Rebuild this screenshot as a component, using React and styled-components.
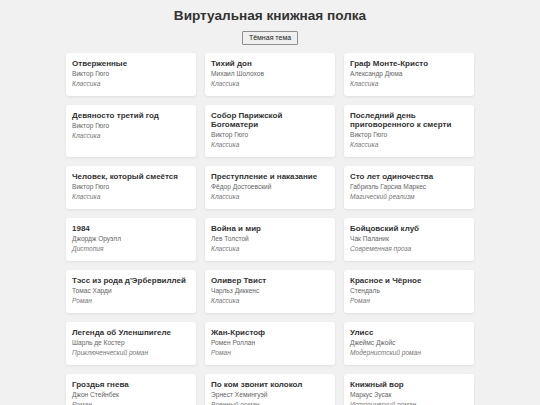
import React from "react";
import styled, { createGlobalStyle } from "styled-components";

const GlobalStyle = createGlobalStyle`
  body {
    margin: 0;
    background-color: #f1f1f1;
    font-family: "Liberation Sans", Arial, sans-serif;
  }
`;

const Page = styled.div`
  display: flex;
  flex-direction: column;
  align-items: center;
  padding: 8px 0 20px;
`;

const Title = styled.h1`
  margin: 0;
  font-size: 13.6px;
  line-height: 16px;
  font-weight: bold;
  color: #333333;
`;

const ThemeButton = styled.button`
  margin-top: 7px;
  padding: 2px 6px;
  height: 14px;
  font-family: "Liberation Sans", Arial, sans-serif;
  font-size: 7px;
  line-height: 8px;
  color: #222222;
  background-color: #efefef;
  border: 1px solid #8f8f8f;
  border-radius: 1px;
`;

const Shelf = styled.div`
  display: grid;
  grid-template-columns: repeat(3, 130px);
  gap: 9px;
  margin-top: 8px;
`;

const Card = styled.div`
  box-sizing: border-box;
  background-color: #ffffff;
  border-radius: 3px;
  padding: 6px 6px 8px;
  box-shadow: 0 1px 3px rgba(0, 0, 0, 0.08);
`;

const BookTitle = styled.h3`
  margin: 0 0 1px;
  font-size: 8px;
  line-height: 9px;
  font-weight: bold;
  color: #333333;
`;

const Author = styled.p`
  margin: 0 0 1px;
  font-size: 6.6px;
  line-height: 9px;
  color: #666666;
`;

const Genre = styled.p`
  margin: 0;
  font-size: 6.6px;
  line-height: 9px;
  font-style: italic;
  color: #777777;
`;

const books = [
  { title: "Отверженные", author: "Виктор Гюго", genre: "Классика" },
  { title: "Тихий дон", author: "Михаил Шолохов", genre: "Классика" },
  { title: "Граф Монте-Кристо", author: "Александр Дюма", genre: "Классика" },
  { title: "Девяносто третий год", author: "Виктор Гюго", genre: "Классика" },
  { title: "Собор Парижской Богоматери", author: "Виктор Гюго", genre: "Классика" },
  { title: "Последний день приговоренного к смерти", author: "Виктор Гюго", genre: "Классика" },
  { title: "Человек, который смеётся", author: "Виктор Гюго", genre: "Классика" },
  { title: "Преступление и наказание", author: "Фёдор Достоевский", genre: "Классика" },
  { title: "Сто лет одиночества", author: "Габриэль Гарсиа Маркес", genre: "Магический реализм" },
  { title: "1984", author: "Джордж Оруэлл", genre: "Дистопия" },
  { title: "Война и мир", author: "Лев Толстой", genre: "Классика" },
  { title: "Бойцовский клуб", author: "Чак Паланик", genre: "Современная проза" },
  { title: "Тэсс из рода д'Эрбервиллей", author: "Томас Харди", genre: "Роман" },
  { title: "Оливер Твист", author: "Чарльз Диккенс", genre: "Классика" },
  { title: "Красное и Чёрное", author: "Стендаль", genre: "Роман" },
  { title: "Легенда об Уленшпигеле", author: "Шарль де Костер", genre: "Приключенческий роман" },
  { title: "Жан-Кристоф", author: "Ромен Роллан", genre: "Роман" },
  { title: "Улисс", author: "Джеймс Джойс", genre: "Модернистский роман" },
  { title: "Гроздья гнева", author: "Джон Стейнбек", genre: "Роман" },
  { title: "По ком звонит колокол", author: "Эрнест Хемингуэй", genre: "Военный роман" },
  { title: "Книжный вор", author: "Маркус Зусак", genre: "Исторический роман" },
];

const App = () => (
  <>
    <GlobalStyle />
    <Page>
      <Title>Виртуальная книжная полка</Title>
      <ThemeButton>Тёмная тема</ThemeButton>
      <Shelf>
        {books.map((book) => (
          <Card key={book.title}>
            <BookTitle>{book.title}</BookTitle>
            <Author>{book.author}</Author>
            <Genre>{book.genre}</Genre>
          </Card>
        ))}
      </Shelf>
    </Page>
  </>
);

export default App;
